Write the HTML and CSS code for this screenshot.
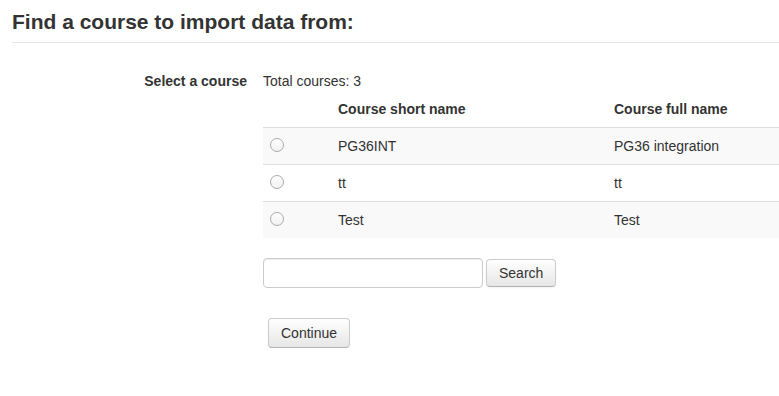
FILE: index.html
```html
<!DOCTYPE html>
<html lang="en">
<head>
    <meta charset="UTF-8">
    <meta name="viewport" content="width=device-width, initial-scale=1.0">
    <title>Import course</title>
    <link rel="stylesheet" href="styles.css">
</head>
<body>

<h2 class="page-title">Find a course to import data from:</h2>

<form class="import-form">
    <div class="form-row">
        <div class="form-label">Select a course</div>
        <div class="form-field">
            <div class="total">Total courses: 3</div>
            <table class="course-table">
                <thead>
                    <tr>
                        <th class="col-select"></th>
                        <th class="col-short">Course short name</th>
                        <th class="col-full">Course full name</th>
                    </tr>
                </thead>
                <tbody>
                    <tr>
                        <td><input type="radio" name="importid" value="2"></td>
                        <td>PG36INT</td>
                        <td>PG36 integration</td>
                    </tr>
                    <tr>
                        <td><input type="radio" name="importid" value="3"></td>
                        <td>tt</td>
                        <td>tt</td>
                    </tr>
                    <tr>
                        <td><input type="radio" name="importid" value="4"></td>
                        <td>Test</td>
                        <td>Test</td>
                    </tr>
                </tbody>
            </table>

            <div class="search-row">
                <input type="text" class="search-input" name="search">
                <button type="button" class="btn">Search</button>
            </div>

            <div class="submit-row">
                <button type="submit" class="btn">Continue</button>
            </div>
        </div>
    </div>
</form>

</body>
</html>
```

FILE: styles.css
```css
body {
    margin: 0;
    padding: 0 0 0 12px;
    font-family: "Liberation Sans", Arial, sans-serif;
    font-size: 14px;
    line-height: 20px;
    color: #333;
    background: #fff;
    overflow: hidden;
}

.page-title {
    margin: 0;
    padding: 10px 0 8px;
    font-size: 21px;
    line-height: 24px;
    font-weight: bold;
    color: #333;
    border-bottom: 1px solid #e5e5e5;
}

.import-form {
    margin-top: 28px;
}

.form-row {
    display: flex;
    gap: 16px;
}

.form-label {
    width: 235px;
    text-align: right;
    font-weight: bold;
    flex-shrink: 0;
}

.form-field {
    flex: 1;
}

.course-table {
    border-collapse: collapse;
    width: 540px;
}

.course-table th,
.course-table td {
    padding: 8px;
    text-align: left;
    vertical-align: top;
}

.course-table th {
    font-weight: bold;
}

.course-table td {
    border-top: 1px solid #ddd;
}

.course-table tbody tr:nth-child(odd) td {
    background-color: #f9f9f9;
}

.col-select {
    width: 51px;
}

.col-short {
    width: 260px;
}

.course-table input[type="radio"] {
    appearance: none;
    -webkit-appearance: none;
    width: 14px;
    height: 14px;
    margin: 2px 0 0 -1px;
    border: 1px solid #aaa;
    border-radius: 50%;
    background: linear-gradient(#fff, #f1f1f1);
    display: block;
}

.search-row {
    display: flex;
    align-items: center;
    gap: 3px;
    margin-top: 20px;
}

.search-input {
    width: 206px;
    height: 20px;
    padding: 4px 6px;
    border: 1px solid #ccc;
    border-radius: 4px;
    font-family: inherit;
    font-size: 14px;
    box-shadow: inset 0 1px 1px rgba(0, 0, 0, 0.075);
}

.btn {
    font-family: inherit;
    font-size: 14px;
    line-height: 20px;
    color: #333;
    padding: 3px 12px;
    border: 1px solid #ccc;
    border-bottom-color: #b3b3b3;
    border-radius: 4px;
    background: linear-gradient(#fff, #e6e6e6);
    box-shadow: inset 0 1px 0 rgba(255, 255, 255, 0.2), 0 1px 2px rgba(0, 0, 0, 0.05);
    cursor: pointer;
}

.submit-row {
    margin-top: 30px;
    padding-left: 5px;
}

.submit-row .btn {
    padding: 4px 12px;
}
```
